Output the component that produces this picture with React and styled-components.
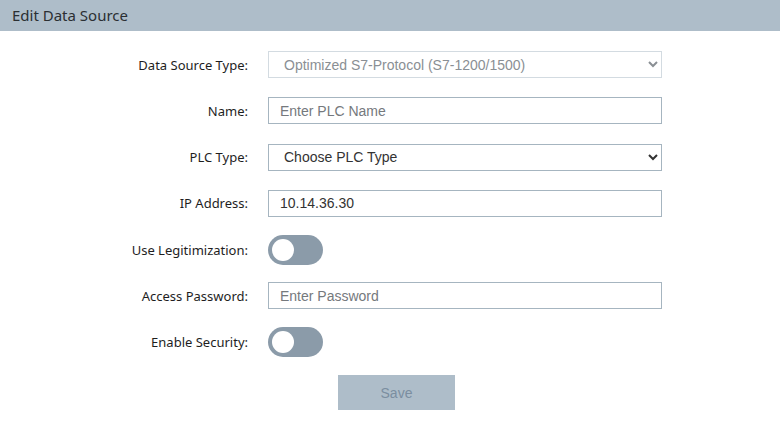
import * as React from "react"
import { useState } from "react"
import styled, { createGlobalStyle } from "styled-components"

const GlobalStyle = createGlobalStyle`
  body {
    margin: 0;
    background: #ffffff;
    font-family: "Noto Sans", "Open Sans", sans-serif;
  }
`

const Header = styled.div`
  height: 31px;
  background: #aebdc9;
  color: #2b2f33;
  font-size: 15px;
  line-height: 30px;
  padding-left: 12px;
`

const Form = styled.form`
  padding-top: 19.5px;
`

const Fields = styled.div`
  display: grid;
  grid-template-columns: 248px 394px;
  grid-auto-rows: 28px;
  column-gap: 20px;
  row-gap: 18.25px;
  align-items: center;
`

const Label = styled.label`
  text-align: right;
  font-size: 13px;
  color: #1e1e1e;
`

const fieldCss = `
  box-sizing: border-box;
  width: 394px;
  height: 27px;
  font-family: "Liberation Sans", Arial, sans-serif;
  font-size: 14px;
  background: #ffffff;
  outline: none;
`

const Select = styled.select`
  ${fieldCss}
  padding: 0 8px 0 11px;
  border: 1px solid ${p => (p.disabled ? "#d3dbe1" : "#a6b5c0")};
  color: ${p => (p.disabled ? "#8a8f94" : "#333333")};
  border-radius: 0;
  opacity: 1;
`

const Input = styled.input`
  ${fieldCss}
  padding: 0 11px;
  border: 1px solid #a6b5c0;
  color: #333333;
  &::placeholder {
    color: #75797d;
  }
`

const Toggle = styled.button`
  position: relative;
  width: 55px;
  height: 30px;
  border: none;
  border-radius: 15px;
  padding: 0;
  background: ${p => (p.$on ? "#009999" : "#8b9ba9")};
  cursor: pointer;

  &::after {
    content: "";
    position: absolute;
    top: 4px;
    left: ${p => (p.$on ? "29px" : "4px")};
    width: 22px;
    height: 22px;
    border-radius: 50%;
    background: #ffffff;
  }
`

const Footer = styled.div`
  display: flex;
  padding-left: 338px;
  margin-top: 19px;
`

const SaveButton = styled.button`
  width: 117px;
  height: 35px;
  border: none;
  padding: 0;
  background: #aebdc9;
  color: #7b8ea0;
  font-family: "Liberation Sans", Arial, sans-serif;
  font-size: 14px;
`

function App() {
  const [legit, setLegit] = useState(false)
  const [security, setSecurity] = useState(false)

  return <>
    <GlobalStyle />
    <Header>Edit Data Source</Header>
    <Form onSubmit={e => e.preventDefault()}>
      <Fields>
        <Label>Data Source Type:</Label>
        <Select disabled defaultValue="s7">
          <option value="s7">Optimized S7-Protocol (S7-1200/1500)</option>
        </Select>

        <Label>Name:</Label>
        <Input type="text" placeholder="Enter PLC Name" />

        <Label>PLC Type:</Label>
        <Select defaultValue="">
          <option value="">Choose PLC Type</option>
          <option value="1200">S7-1200</option>
          <option value="1500">S7-1500</option>
        </Select>

        <Label>IP Address:</Label>
        <Input type="text" defaultValue="10.14.36.30" />

        <Label>Use Legitimization:</Label>
        <Toggle type="button" $on={legit} onClick={() => setLegit(!legit)} />

        <Label>Access Password:</Label>
        <Input type="password" placeholder="Enter Password" />

        <Label>Enable Security:</Label>
        <Toggle type="button" $on={security} onClick={() => setSecurity(!security)} />
      </Fields>
      <Footer>
        <SaveButton type="submit" disabled>Save</SaveButton>
      </Footer>
    </Form>
  </>
}

export default App
